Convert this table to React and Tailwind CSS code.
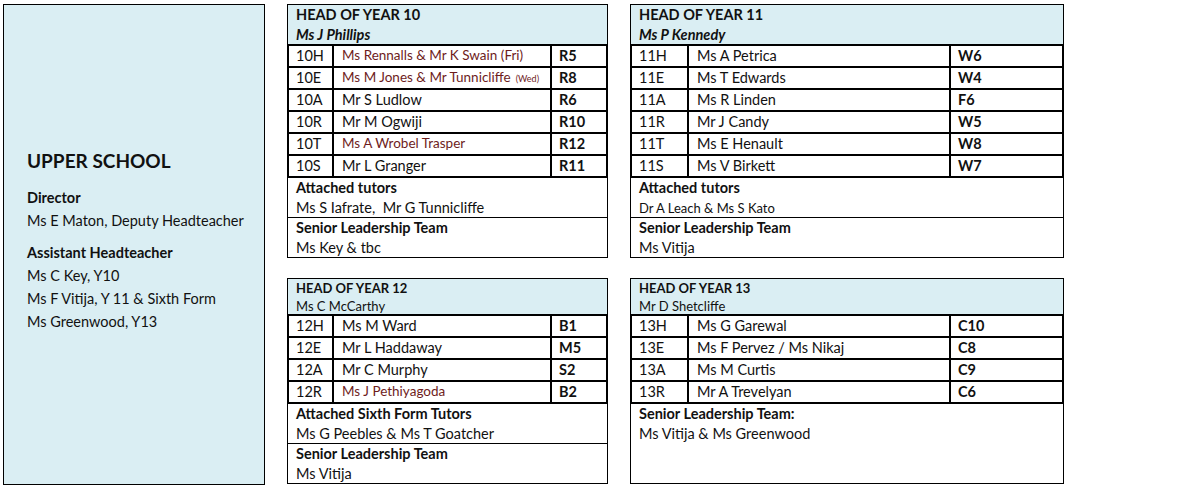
import React from 'react';

const maroon = 'text-[#6e1c1c]';

const year10 = [
  { form: '10H', name: 'Ms Rennalls & Mr K Swain (Fri)', room: 'R5', small: true },
  { form: '10E', name: 'Ms M Jones & Mr Tunnicliffe', note: '(Wed)', room: 'R8', small: true },
  { form: '10A', name: 'Mr S Ludlow', room: 'R6' },
  { form: '10R', name: 'Mr M Ogwiji', room: 'R10' },
  { form: '10T', name: 'Ms A Wrobel Trasper', room: 'R12', small: true },
  { form: '10S', name: 'Mr L Granger', room: 'R11' },
];

const year11 = [
  { form: '11H', name: 'Ms A Petrica', room: 'W6' },
  { form: '11E', name: 'Ms T Edwards', room: 'W4' },
  { form: '11A', name: 'Ms R Linden', room: 'F6' },
  { form: '11R', name: 'Mr J Candy', room: 'W5' },
  { form: '11T', name: 'Ms E Henault', room: 'W8' },
  { form: '11S', name: 'Ms V Birkett', room: 'W7' },
];

const year12 = [
  { form: '12H', name: 'Ms M Ward', room: 'B1' },
  { form: '12E', name: 'Mr L Haddaway', room: 'M5' },
  { form: '12A', name: 'Mr C Murphy', room: 'S2' },
  { form: '12R', name: 'Ms J Pethiyagoda', room: 'B2', small: true },
];

const year13 = [
  { form: '13H', name: 'Ms G Garewal', room: 'C10' },
  { form: '13E', name: 'Ms F Pervez / Ms Nikaj', room: 'C8' },
  { form: '13A', name: 'Ms M Curtis', room: 'C9' },
  { form: '13R', name: 'Mr A Trevelyan', room: 'C6' },
];

const Header = ({ title, head, big }) =>
  big ? (
    <div className="h-[40px] border-x border-t border-black bg-[#daeef3] pl-[8px] flex flex-col justify-center">
      <div className="font-bold text-[14.5px] leading-[20px]">{title}</div>
      <div className="font-bold italic text-[14.5px] leading-[20px]">{head}</div>
    </div>
  ) : (
    <div className="h-[36px] border-x border-t border-black bg-[#daeef3] pl-[8px] flex flex-col justify-center">
      <div className="font-bold text-[13px] leading-[18px]">{title}</div>
      <div className="text-[13px] leading-[18px]">{head}</div>
    </div>
  );

const FormTable = ({ rows, c1, c2 }) => (
  <div className="border-2 border-black">
    {rows.map((r, i) => (
      <div key={r.form} className={i > 0 ? 'flex h-[22px] border-t-2 border-black' : 'flex h-[20px]'}>
        <div className={`${c1} shrink-0 pl-[7px] flex items-center text-[14.5px]`}>{r.form}</div>
        <div className={`${c2} shrink-0 border-l-2 border-black pl-[8px] flex items-center`}>
          {r.small ? (
            <span className={`${maroon} text-[13.5px] -mt-[1px]`}>
              {r.name}
              {r.note && <span className="text-[9px] ml-[5px]">{r.note}</span>}
            </span>
          ) : (
            <span className="text-[14.5px]">{r.name}</span>
          )}
        </div>
        <div className="flex-1 border-l-2 border-black pl-[7px] flex items-center font-bold text-[14.5px]">
          {r.room}
        </div>
      </div>
    ))}
  </div>
);

const Section = ({ title, children, tall }) => (
  <div className={`${tall ? 'h-[80px]' : 'h-[40px]'} border-x border-b border-black pl-[8px]`}>
    <div className="font-bold text-[14.5px] leading-[20px]">{title}</div>
    {children}
  </div>
);

export default function App() {
  return (
    <div className="font-[Lato,'Open_Sans',sans-serif] text-[#111] bg-white w-[1198px] h-[490px] pt-[4px] pl-[3px] flex">
      <div className="w-[262px] h-[481px] shrink-0 border border-black bg-[#daeef3] pl-[23px] pt-[143px]">
        <div className="font-bold text-[19px] leading-[26px]">UPPER SCHOOL</div>
        <div className="mt-[12px] font-bold text-[14.5px] leading-[23px]">Director</div>
        <div className="text-[14.5px] leading-[23px]">Ms E Maton, Deputy Headteacher</div>
        <div className="mt-[9px] font-bold text-[14.5px] leading-[23px]">Assistant Headteacher</div>
        <div className="text-[14.5px] leading-[23px]">Ms C Key, Y10</div>
        <div className="text-[14.5px] leading-[23px]">Ms F Vitija, Y 11 &amp; Sixth Form</div>
        <div className="text-[14.5px] leading-[23px]">Ms Greenwood, Y13</div>
      </div>

      <div className="ml-[22px] w-[321px] shrink-0 flex flex-col">
        <div>
          <Header big title="HEAD OF YEAR 10" head="Ms J Phillips" />
          <FormTable rows={year10} c1="w-[43px]" c2="w-[218px]" />
          <Section title="Attached tutors">
            <div className="text-[14.5px] leading-[20px]">Ms S Iafrate,&nbsp; Mr G Tunnicliffe</div>
          </Section>
          <Section title="Senior Leadership Team">
            <div className="text-[14.5px] leading-[20px]">Ms Key &amp; tbc</div>
          </Section>
        </div>
        <div className="mt-[20px]">
          <Header title="HEAD OF YEAR 12" head="Ms C McCarthy" />
          <FormTable rows={year12} c1="w-[43px]" c2="w-[218px]" />
          <Section title="Attached Sixth Form Tutors">
            <div className="text-[14.5px] leading-[20px]">Ms G Peebles &amp; Ms T Goatcher</div>
          </Section>
          <Section title="Senior Leadership Team">
            <div className="text-[14.5px] leading-[20px]">Ms Vitija</div>
          </Section>
        </div>
      </div>

      <div className="ml-[22px] w-[434px] shrink-0 flex flex-col">
        <div>
          <Header big title="HEAD OF YEAR 11" head="Ms P Kennedy" />
          <FormTable rows={year11} c1="w-[55px]" c2="w-[262px]" />
          <Section title="Attached tutors">
            <div className="text-[13px] leading-[20px]">Dr A Leach &amp; Ms S Kato</div>
          </Section>
          <Section title="Senior Leadership Team">
            <div className="text-[14.5px] leading-[20px]">Ms Vitija</div>
          </Section>
        </div>
        <div className="mt-[20px]">
          <Header title="HEAD OF YEAR 13" head="Mr D Shetcliffe" />
          <FormTable rows={year13} c1="w-[55px]" c2="w-[262px]" />
          <Section tall title="Senior Leadership Team:">
            <div className="text-[14.5px] leading-[20px]">Ms Vitija &amp; Ms Greenwood</div>
          </Section>
        </div>
      </div>
    </div>
  );
}
